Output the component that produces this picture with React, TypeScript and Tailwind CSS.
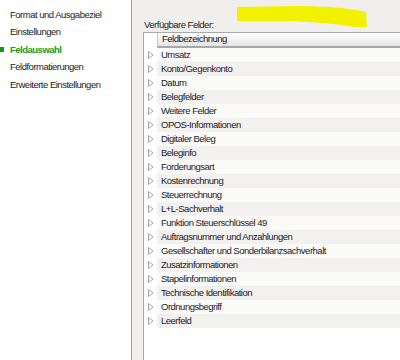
import React from "react";

const navItems = [
  "Format und Ausgabeziel",
  "Einstellungen",
  "Feldauswahl",
  "Feldformatierungen",
  "Erweiterte Einstellungen",
];

const fields = [
  "Umsatz",
  "Konto/Gegenkonto",
  "Datum",
  "Belegfelder",
  "Weitere Felder",
  "OPOS-Informationen",
  "Digitaler Beleg",
  "Beleginfo",
  "Forderungsart",
  "Kostenrechnung",
  "Steuerrechnung",
  "L+L-Sachverhalt",
  "Funktion Steuerschlüssel 49",
  "Auftragsnummer und Anzahlungen",
  "Gesellschafter und Sonderbilanzsachverhalt",
  "Zusatzinformationen",
  "Stapelinformationen",
  "Technische Identifikation",
  "Ordnungsbegriff",
  "Leerfeld",
];

function Expander() {
  return (
    <svg width="6" height="8" viewBox="0 0 6 8" className="block">
      <path d="M0.5 0.5 L5 4 L0.5 7.5 Z" fill="#fff" stroke="#a6a6a6" strokeWidth="1" />
    </svg>
  );
}

export default function App() {
  return (
    <div
      className="flex w-[400px] h-[360px] overflow-hidden bg-white text-[9.5px] tracking-[-0.5px]"
      style={{ fontFamily: '"Liberation Sans", Arial, sans-serif' }}
    >
      {/* sidebar */}
      <div className="w-[131px] shrink-0 bg-white pt-[6px]">
        {navItems.map((item) => {
          const active = item === "Feldauswahl";
          return (
            <div key={item} className="relative h-[17.5px] flex items-center pl-[10px]">
              {active && <div className="absolute left-0 top-[6px] w-[4px] h-[5px] bg-[#0f9a0f]" />}
              <span className={active ? "font-bold text-[#169c16]" : "text-[#1c1c1c]"}>{item}</span>
            </div>
          );
        })}
      </div>

      {/* panel */}
      <div className="flex-1 border-l border-[#a0a0a0] bg-[#f0efed] pl-[11px] relative">
        <svg className="absolute left-[105px] top-[6px]" width="131" height="22" viewBox="0 0 131 22">
          <path d="M0 1 L60 0 C90 0, 110 2, 129 6 L130 21 L118 21 C100 18, 70 15, 40 15 L0 15 Z" fill="#f2f200" />
        </svg>
        <div className="h-[32px] flex items-end pb-0 pl-[1px] text-[#1c1c1c]">Verfügbare Felder:</div>
        <div className="h-[328px] border-l border-t border-[#a9a9a9] bg-white flex">
          <div className="w-[13px] shrink-0 bg-white flex flex-col">
            <div className="h-[15px]" />
            {fields.map((f) => (
              <div key={f} className="h-[14px] flex items-center justify-center pl-[1px]">
                <Expander />
              </div>
            ))}
          </div>
          <div className="flex-1 flex flex-col">
            <div className="h-[15px] border-l border-b-2 border-l-[#c8c8c8] border-b-[#a8a8a8] bg-gradient-to-b from-white to-[#e4e4e4] flex items-center pl-[4px] text-[#141414]">
              Feldbezeichnung
            </div>
            {fields.map((f, i) => (
              <div
                key={f}
                className={`h-[14px] flex items-center pl-[4px] text-[#241828] ${
                  i % 2 === 0 ? "bg-[#fafaf8]" : "bg-[#f2f1ef]"
                }`}
              >
                {f}
              </div>
            ))}
            <div className="flex-1 bg-white" />
          </div>
        </div>
      </div>
    </div>
  );
}
